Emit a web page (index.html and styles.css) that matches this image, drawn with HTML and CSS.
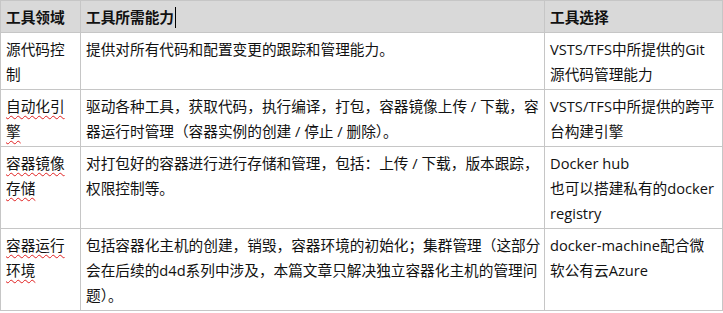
FILE: index.html
```html
<!DOCTYPE html>
<html lang="zh">
<head>
<meta charset="utf-8">
<link rel="stylesheet" href="styles.css">
</head>
<body>
<table class="grid">
  <colgroup>
    <col class="c1">
    <col class="c2">
    <col class="c3">
  </colgroup>
  <thead>
    <tr>
      <th>工具领域</th>
      <th>工具所需能力<span class="caret"></span></th>
      <th>工具选择</th>
    </tr>
  </thead>
  <tbody>
    <tr>
      <td>源代码控制</td>
      <td>提供对所有代码和配置变更的跟踪和管理能力。</td>
      <td>VSTS/TFS中所提供的Git<br>源代码管理能力</td>
    </tr>
    <tr>
      <td><span class="spell">自动化引擎</span></td>
      <td>驱动各种工具，获取代码，执行编译，打包，容器镜像上传 / 下载，容器运行时管理（容器实例的创建 / 停止 / 删除）。</td>
      <td>VSTS/TFS中所提供的跨平<br>台构建引擎</td>
    </tr>
    <tr>
      <td><span class="spell">容器镜像存储</span></td>
      <td>对打包好的容器进行进行存储和管理，包括：上传 / 下载，版本跟踪，权限控制等。</td>
      <td>Docker hub<br>也可以搭建私有的docker<br>registry</td>
    </tr>
    <tr>
      <td><span class="spell">容器运行环境</span></td>
      <td>包括容器化主机的创建，销毁，容器环境的初始化；集群管理（这部分会在后续的d4d系列中涉及，本篇文章只解决独立容器化主机的管理问题）。</td>
      <td>docker-machine配合微<br>软公有云Azure</td>
    </tr>
  </tbody>
</table>
</body>
</html>
```

FILE: styles.css
```css
html, body {
  margin: 0;
  padding: 0;
  background: #ffffff;
}

.grid {
  border-collapse: collapse;
  table-layout: fixed;
  width: 722px;
  font-family: "Open Sans", "Noto Sans CJK SC", sans-serif;
  font-size: 11pt;
  line-height: 25px;
  color: #111111;
}

.c1 { width: 80px; }
.c2 { width: 464px; }
.c3 { width: 178px; }

.grid th,
.grid td {
  border: 1px solid #c6c6c6;
  padding: 4px 1px 2px 5px;
  vertical-align: top;
  text-align: left;
}

.grid th {
  background: #d9d9d9;
  font-weight: bold;
}

.caret {
  display: inline-block;
  width: 1px;
  height: 21px;
  background: #000;
  vertical-align: -5px;
  margin-left: 1px;
}

.spell {
  text-decoration: underline wavy #e02020;
  text-decoration-thickness: 1px;
  text-underline-offset: 3px;
}
```
